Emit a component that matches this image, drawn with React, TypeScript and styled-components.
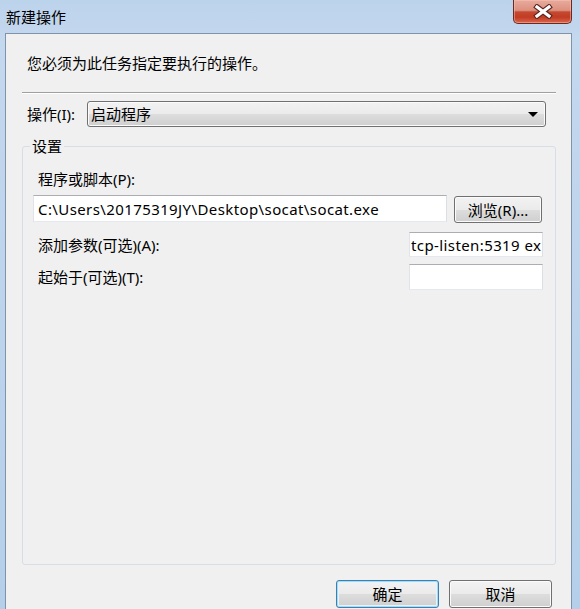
import React from "react";
import styled, { createGlobalStyle, css } from "styled-components";

const Global = createGlobalStyle`
  html, body { margin: 0; padding: 0; background: #b9d1ea; }
  body { width: 580px; height: 609px; overflow: hidden; }
  * { box-sizing: border-box; }
`;

const FONT = `"Noto Sans", "Noto Sans CJK SC", sans-serif`;

const Window = styled.div`
  width: 580px;
  height: 609px;
  overflow: hidden;
  display: flex;
  flex-direction: column;
  padding: 0 8px 0 5px;
  background: linear-gradient(to bottom, #bcd3ec 0%, #c4d8ee 40px, #b5cfea 100%);
  font-family: ${FONT};
  font-size: 15px;
  color: #000;
`;

const TitleBar = styled.div`
  height: 33px;
  flex: none;
  display: flex;
  align-items: flex-start;
  justify-content: space-between;
`;

const Title = styled.div`
  align-self: center;
  margin-left: 1px;
  line-height: 20px;
  color: #000;
`;

const CloseButton = styled.div`
  width: 59px;
  height: 24px;
  display: flex;
  align-items: center;
  justify-content: center;
  border: 1px solid #6a2a22;
  border-top: none;
  border-radius: 0 0 5px 5px;
  background: linear-gradient(
    to bottom,
    #e8ab9d 0%,
    #dc907f 45%,
    #c6492f 52%,
    #c23c24 75%,
    #d9674c 100%
  );
  box-shadow: inset 0 0 0 1px rgba(255, 200, 190, 0.45);
`;

const Client = styled.div`
  flex: 1;
  display: flex;
  flex-direction: column;
  background: #f0f0f0;
  border: 1px solid #7f93ab;
  border-bottom: none;
  padding: 19px 15px 0 21px;
`;

const Instruction = styled.div`
  line-height: 20px;
`;

const Separator = styled.div`
  margin: 19px 0 0 -5px;
  height: 2px;
  border-top: 1px solid #a0a0a0;
  border-bottom: 1px solid #ffffff;
`;

const ActionRow = styled.div`
  margin-top: 7px;
  display: flex;
  align-items: center;
  padding-right: 10px;
`;

const Label = styled.span`
  line-height: 20px;
  white-space: nowrap;
`;

const ActionLabel = styled(Label)`
  width: 60px;
  flex: none;
`;

const bevel = css`
  border: 1px solid #707070;
  border-radius: 3px;
  background: linear-gradient(
    to bottom,
    #f2f2f2 0%,
    #ebebeb 50%,
    #dddddd 51%,
    #cfcfcf 100%
  );
  box-shadow: inset 0 0 0 1px #fbfbfb;
`;

const Select = styled.div`
  ${bevel};
  flex: 1;
  height: 26px;
  display: flex;
  align-items: center;
  justify-content: space-between;
  padding: 0 6px 0 3px;
  line-height: 20px;
`;

const Arrow = styled.span`
  width: 0;
  height: 0;
  border-left: 5px solid transparent;
  border-right: 5px solid transparent;
  border-top: 5px solid #000;
  margin-right: 1px;
`;

const GroupBox = styled.fieldset`
  margin: 9px 0 0 -5px;
  height: 429px;
  border: 1px solid #d5dfe5;
  border-radius: 3px;
  padding: 13px 12px 0 10px;
  min-width: 0;
`;

const Legend = styled.legend`
  margin-left: -3px;
  padding: 0 2px;
  line-height: 20px;
`;

const FieldLabel = styled(Label)`
  margin-left: 5px;
`;

const PathRow = styled.div`
  margin-top: 6px;
  display: flex;
  align-items: flex-start;
  gap: 7px;
`;

const ParamRow = styled.div<{ $gap: number }>`
  margin-top: ${(p) => p.$gap}px;
  display: flex;
  align-items: center;
  justify-content: space-between;
`;

const TextBox = styled.div<{ $w: number; $h: number; $pad?: number }>`
  width: ${(p) => p.$w}px;
  height: ${(p) => p.$h}px;
  flex: none;
  background: #fff;
  border: 1px solid;
  border-color: #abadb3 #dbdfe6 #e3e9ef #e2e3ea;
  padding: 0 0 0 ${(p) => p.$pad ?? 4}px;
  display: flex;
  align-items: center;
  overflow: hidden;
  white-space: nowrap;
  line-height: 20px;
  letter-spacing: 0.4px;
`;

const PushButton = styled.div<{ $w: number; $default?: boolean }>`
  ${bevel};
  width: ${(p) => p.$w}px;
  height: 27px;
  flex: none;
  display: flex;
  align-items: center;
  justify-content: center;
  line-height: 20px;
  ${(p) =>
    p.$default &&
    css`
      border-color: #3c7fb1;
      box-shadow: inset 0 0 0 1px #a6dcf3, inset 0 0 0 2px #e4f4fb;
    `}
`;

const BrowseButton = styled(PushButton)`
  margin-top: 1px;
`;

const ButtonRow = styled.div`
  margin-top: 15px;
  display: flex;
  justify-content: flex-end;
  gap: 10px;
  padding-right: 4px;
`;

const DialogButton = styled(PushButton)`
  height: 28px;
`;

function CloseGlyph() {
  return (
    <svg width="20" height="15" viewBox="0 0 20 15">
      <g strokeLinecap="square">
        <path d="M4 3 L16 12 M16 3 L4 12" stroke="#5a2620" strokeWidth="5.4" />
        <path d="M4 3 L16 12 M16 3 L4 12" stroke="#ffffff" strokeWidth="3.2" />
      </g>
    </svg>
  );
}

export default function App() {
  return (
    <>
      <Global />
      <Window>
        <TitleBar>
          <Title>新建操作</Title>
          <CloseButton>
            <CloseGlyph />
          </CloseButton>
        </TitleBar>
        <Client>
          <Instruction>您必须为此任务指定要执行的操作。</Instruction>
          <Separator />
          <ActionRow>
            <ActionLabel>操作(I):</ActionLabel>
            <Select>
              <span>启动程序</span>
              <Arrow />
            </Select>
          </ActionRow>
          <GroupBox>
            <Legend>设置</Legend>
            <FieldLabel>程序或脚本(P):</FieldLabel>
            <PathRow>
              <TextBox $w={414} $h={27}>C:\Users\20175319JY\Desktop\socat\socat.exe</TextBox>
              <BrowseButton $w={88}>浏览(R)...</BrowseButton>
            </PathRow>
            <ParamRow $gap={9}>
              <FieldLabel>添加参数(可选)(A):</FieldLabel>
              <TextBox $w={134} $h={25} $pad={1}>tcp-listen:5319 ex</TextBox>
            </ParamRow>
            <ParamRow $gap={7}>
              <FieldLabel>起始于(可选)(T):</FieldLabel>
              <TextBox $w={134} $h={26} />
            </ParamRow>
          </GroupBox>
          <ButtonRow>
            <DialogButton $w={103} $default>确定</DialogButton>
            <DialogButton $w={103}>取消</DialogButton>
          </ButtonRow>
        </Client>
      </Window>
    </>
  );
}
